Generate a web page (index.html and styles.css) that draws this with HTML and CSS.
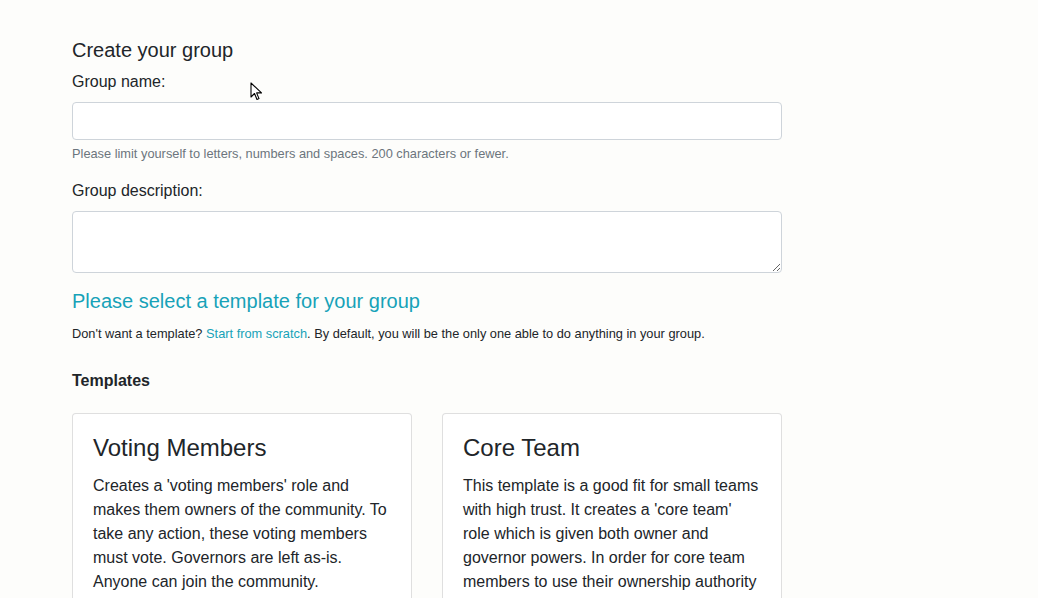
FILE: index.html
```html
<!DOCTYPE html>
<html lang="en">
<head>
<meta charset="utf-8">
<title>Create your group</title>
<link rel="stylesheet" href="styles.css">
</head>
<body>
<main class="container">
  <h5 class="page-title">Create your group</h5>
  <form class="form">
    <div class="form-group">
      <label class="label" for="name">Group name:</label>
      <input class="input" id="name" type="text">
      <small class="help">Please limit yourself to letters, numbers and spaces. 200 characters or fewer.</small>
    </div>
    <div class="form-group">
      <label class="label" for="desc">Group description:</label>
      <textarea class="input textarea" id="desc"></textarea>
    </div>
  </form>
  <h5 class="select-title">Please select a template for your group</h5>
  <p class="note">Don't want a template? <a class="link" href="#">Start from scratch</a>. By default, you will be the only one able to do anything in your group.</p>
  <h6 class="templates-title">Templates</h6>
  <div class="cards">
    <div class="card">
      <h4 class="card-title">Voting Members</h4>
      <p class="card-text">Creates a 'voting members' role and makes them owners of the community. To take any action, these voting members must vote. Governors are left as-is. Anyone can join the community.</p>
    </div>
    <div class="card">
      <h4 class="card-title">Core Team</h4>
      <p class="card-text">This template is a good fit for small teams with high trust. It creates a 'core team' role which is given both owner and governor powers. In order for core team members to use their ownership authority they must vote.</p>
    </div>
  </div>
</main>
<svg class="cursor" width="13" height="20" viewBox="0 0 13 20"><path d="M1 1 L1 15 L4.5 11.5 L7 17.5 L9 16.6 L6.6 10.9 L11.5 10.9 Z" fill="#fff" stroke="#000" stroke-width="1.1" stroke-linejoin="round"/></svg>
</body>
</html>
```
FILE: styles.css
```css
* { box-sizing: border-box; }
html, body { margin: 0; padding: 0; }
body {
  background: #fdfdfb;
  color: #212529;
  font-family: "Liberation Sans", Arial, sans-serif;
  font-size: 16px;
  line-height: 1.5;
  height: 598px;
  overflow: hidden;
}
.container {
  width: 710px;
  margin-left: 72px;
  padding-top: 38px;
}
.page-title {
  font-size: 20px;
  font-weight: 400;
  line-height: 1.2;
  margin: 0 0 8px;
}
.form-group { margin-bottom: 16px; display: flex; flex-direction: column; }
.label { display: block; margin-bottom: 8px; }
.input {
  display: block;
  width: 100%;
  height: 38px;
  padding: 6px 12px;
  font-family: inherit;
  font-size: 16px;
  border: 1px solid #ced4da;
  border-radius: 4px;
  background: #fff;
  color: #495057;
}
.textarea { height: 62px; resize: vertical; }
.help {
  display: block;
  margin-top: 4px;
  font-size: 12.8px;
  color: #6c757d;
  line-height: 1.5;
}
.select-title {
  font-size: 20px;
  font-weight: 400;
  line-height: 1.2;
  color: #17a2b8;
  margin: 0 0 11px;
}
.note {
  font-size: 12.8px;
  margin: 0 0 28px;
}
.link { color: #17a2b8; text-decoration: none; }
.templates-title {
  font-size: 16px;
  font-weight: 700;
  line-height: 1.2;
  margin: 0 0 22px;
}
.cards {
  display: grid;
  grid-template-columns: 340px 340px;
  column-gap: 30px;
}
.card {
  border: 1px solid rgba(0,0,0,0.125);
  border-radius: 4px;
  padding: 20px;
  background: #fff;
  height: 260px;
}
.card-title {
  font-size: 24px;
  font-weight: 400;
  line-height: 1.2;
  margin: 0 0 12px;
}
.card-text { margin: 0; }
.cursor { position: absolute; left: 250px; top: 82px; }
```
